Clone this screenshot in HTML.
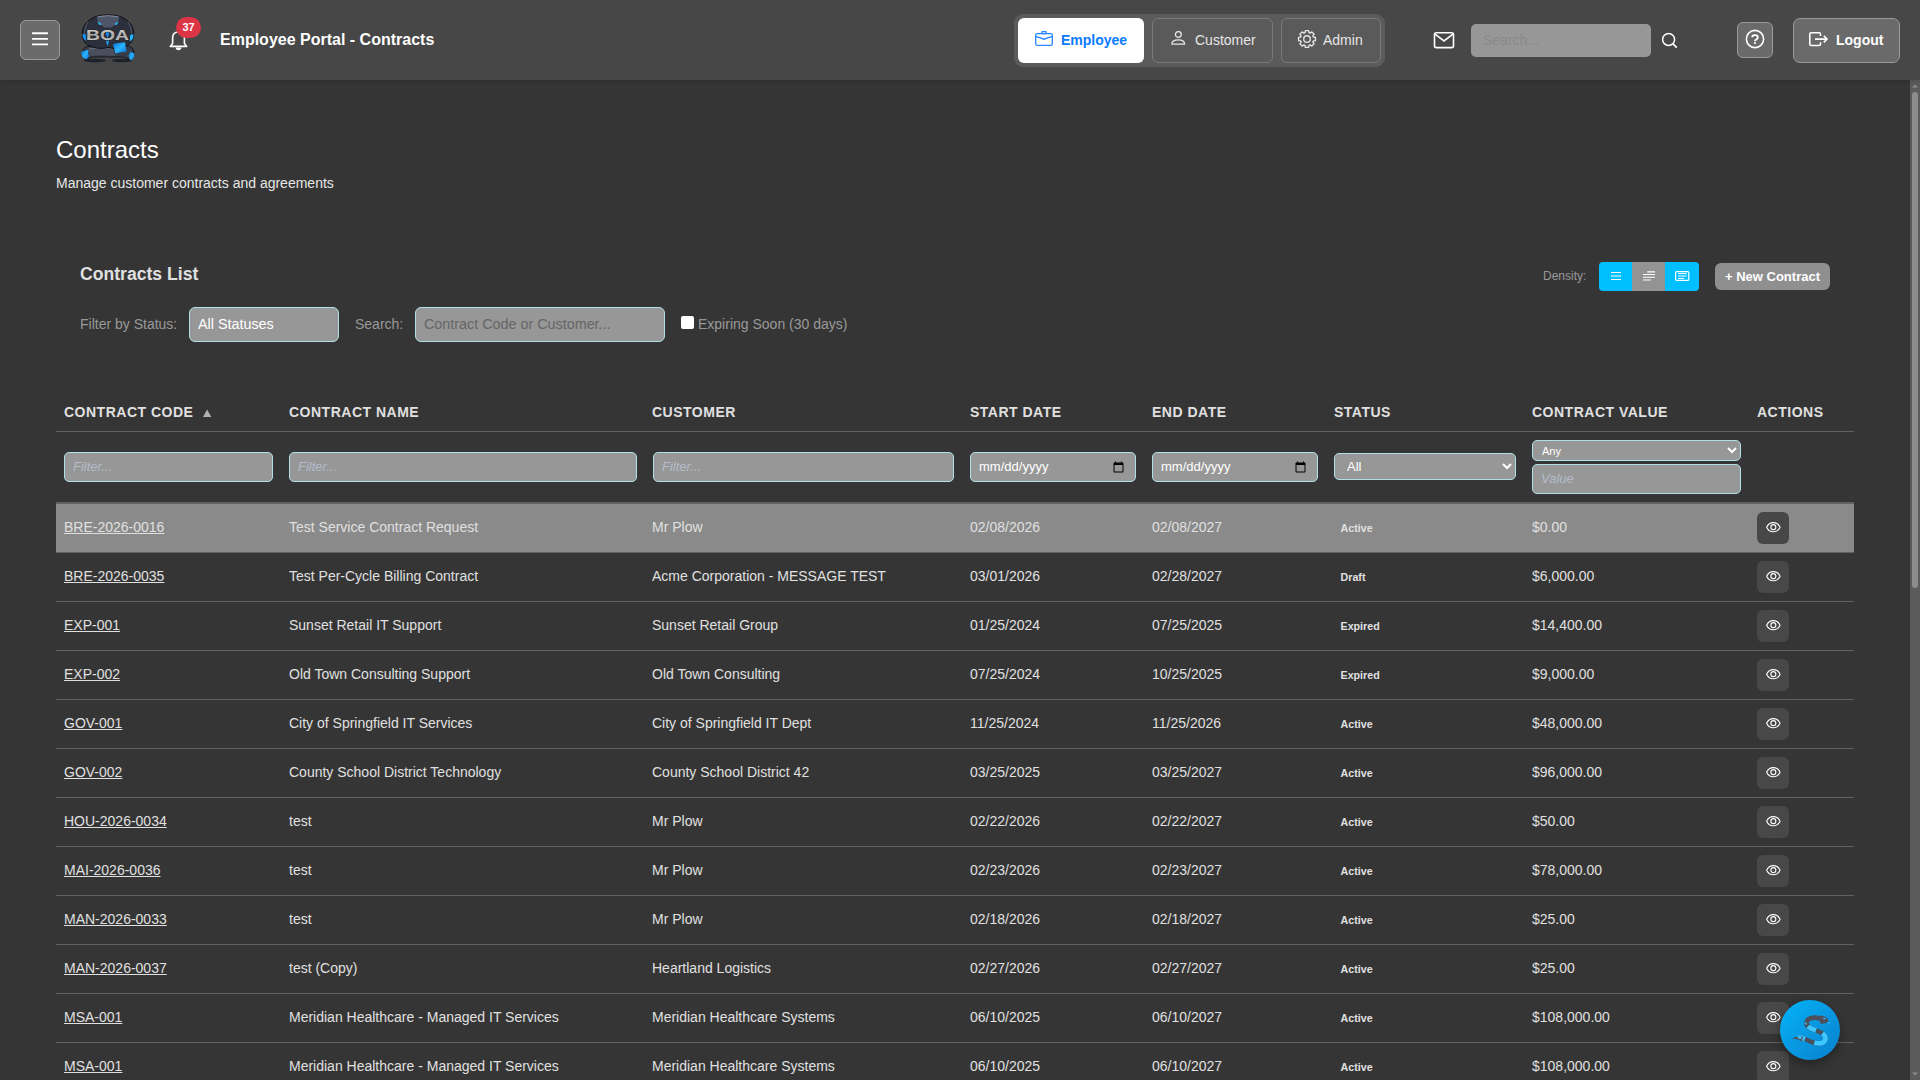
<!DOCTYPE html>
<html><head><meta charset="utf-8">
<style>
*{box-sizing:border-box;}
html,body{margin:0;padding:0;width:1920px;height:1080px;overflow:hidden;background:#353535;font-family:"Liberation Sans",sans-serif;}
.abs{position:absolute;}
#hdr{position:absolute;left:0;top:0;width:1920px;height:80px;background:#474747;box-shadow:0 2px 4px rgba(0,0,0,0.12);z-index:2;}
.hbtn{position:absolute;background:#6a6a6a;border:1px solid #9a9a9a;border-radius:6px;}
.navwrap{position:absolute;left:1014px;top:14px;width:371px;height:53px;background:#5b5b5b;border-radius:9px;}
.nbtn{position:absolute;top:4px;height:45px;border-radius:6px;font-size:14px;color:#e6e6e6;}
.nbtn svg{position:absolute;}
.nbtn span{position:absolute;top:14px;line-height:16px;}
#scroll{position:absolute;left:1910px;top:80px;width:10px;height:1000px;background:#5b5b5b;}
.txt{position:absolute;white-space:nowrap;}
.inp{position:absolute;background:#979797;border:1px solid #b0e0e6;border-radius:5px;}
.th{position:absolute;top:404px;font-size:14px;font-weight:bold;letter-spacing:0.5px;color:#e0e0e0;line-height:16px;white-space:nowrap;}
.row{position:absolute;left:56px;width:1798px;height:49px;border-bottom:1px solid #616161;}
.row .c{position:absolute;top:15px;font-size:14px;line-height:16px;color:#e0e0e0;white-space:nowrap;}
.row .code{text-decoration:underline;}
.row .st{font-size:10.7px;font-weight:bold;top:18px;line-height:13px;margin-left:-0.5px;}
.eye{position:absolute;left:1701px;top:8px;width:32px;height:32px;background:#484848;border-radius:6px;}
.eye svg{position:absolute;left:8.7px;top:9.8px;}
.row.hov{background:#8a8a8a;height:49px;}
.row.hov .eye{background:#474747;}
input.date,select.sel{position:absolute;margin:0;background:#979797;border:1px solid #b0e0e6;border-radius:5px;color:#fff;font-family:"Liberation Sans",sans-serif;}
input.date{font-size:13px;padding:0 8px;}
input.date::-webkit-datetime-edit{position:relative;top:-1px;}
input.date::-webkit-datetime-edit-text,input.date::-webkit-datetime-edit-month-field,input.date::-webkit-datetime-edit-day-field,input.date::-webkit-datetime-edit-year-field{padding:0;}
select.sel{font-size:13px;padding:0 8px;}
</style></head><body>

<div id="hdr">
  <div class="hbtn" style="left:20px;top:20px;width:40px;height:40px;">
    <svg class="abs" style="left:0;top:0;" width="38" height="38"><path d="M11.8 12.3H26.2M11.8 17.9H26.2M11.8 23.4H26.2" stroke="#fff" stroke-width="1.9" stroke-linecap="round"/></svg>
  </div>
  <!-- logo -->
  <svg class="abs" style="left:76px;top:12px;" width="64" height="56" viewBox="76 12 64 56">
    <defs>
      <linearGradient id="lg1" x1="0" y1="0" x2="0" y2="1"><stop offset="0" stop-color="#e6e6e6"/><stop offset="0.55" stop-color="#a9a9a9"/><stop offset="1" stop-color="#d0d0d0"/></linearGradient>
      <linearGradient id="lg2" x1="0" y1="0" x2="1" y2="1"><stop offset="0" stop-color="#0a6fd8"/><stop offset="0.5" stop-color="#2ab4ff"/><stop offset="1" stop-color="#0a6fd8"/></linearGradient>
    </defs>
    <ellipse cx="95" cy="60.5" rx="11" ry="1.8" fill="#1d212b"/>
    <ellipse cx="122" cy="60.5" rx="10" ry="1.8" fill="#1d212b"/>
    <path d="M83 53 Q82 47 88 46.5 L128 46 Q134.5 47.5 134 54 Q133.5 59.5 128.5 59 L123 57 L92 57 L86 59.5 Q82.5 58.5 83 53Z" fill="#383d4b" stroke="#0f121a" stroke-width="0.9"/>
    <path d="M81.4 51.5 Q80.8 57.5 86.5 59.5 L89 56.5 Q87.2 53 88.8 49.8Z" fill="url(#lg2)"/>
    <path d="M134.3 53.5 Q134.8 59.2 130.2 60.2 L128.6 55.5 Q129.8 53.5 130 51.8Z" fill="url(#lg2)"/>
    <path d="M88.5 48 Q101 45.5 113 47.5 L115 56 Q101 54.5 89.5 56Z" fill="#4a4f5e"/>
    <path d="M89 49 Q101 47 113 48.5" stroke="#7a7f8e" stroke-width="0.7" fill="none"/>
    <path d="M95.5 16.5 Q108 13.2 120.5 16.5 Q133.5 22 133.8 33 Q134 41.5 127.5 45.5 Q118 50 108 47.5 Q98 50 88.5 45.5 Q82 41.5 82.2 33 Q82.5 22 95.5 16.5Z" fill="#2b303c" stroke="#0d1017" stroke-width="1"/>
    <path d="M88 22 Q84 28 84.5 35 M128 22 Q132 28 131.5 35" stroke="#4a5063" stroke-width="1.2" fill="none"/>
    <path d="M113 44 Q120 42 125 42.5 L126.5 51.5 Q120 52 115.5 53.5Z" fill="url(#lg2)"/>
    <path d="M96.5 16.5 Q108 13.8 119.5 16.5 L117.5 23 L111.5 27.5 L104.5 27.5 L98.5 23Z" fill="#4e5568"/>
    <path d="M98 16.8 Q108 14.6 118 16.8" stroke="#8a90a0" stroke-width="0.8" fill="none"/>
    <path d="M97.5 21.3 L102 24.2 L99.2 25Z" fill="#2cc0ff"/>
    <path d="M118.5 21.3 L114 24.2 L116.8 25Z" fill="#2cc0ff"/>
    <path d="M82.4 34 Q82.5 39.5 86.5 41 L86.5 34.5Z" fill="#1b8ef2"/>
    <path d="M133.6 34.5 Q133.4 40 129.8 41.5 L130.2 35Z" fill="#22b6ff"/>
    <path d="M105.5 39 L107.5 46.5 L109.5 39Z" fill="#1fa3f7"/>
    <text x="107.6" y="39.8" text-anchor="middle" font-family="Liberation Sans" font-weight="bold" font-size="15.5" fill="url(#lg1)" stroke="#2a2a2a" stroke-width="1.6" paint-order="stroke" textLength="43" lengthAdjust="spacingAndGlyphs">BOA</text>
    <path d="M105.5 32.5 L107.5 38.5 L109.5 32.5Z" fill="#1b8ef2"/>
  </svg>
  <!-- bell -->
  <svg class="abs" style="left:168px;top:29px;" width="21" height="22" viewBox="0 0 21 22"><path d="M2.3 17.4 L4.6 14.6 L4.6 9 Q4.6 3 10.5 3 Q16.4 3 16.4 9 L16.4 14.6 L18.7 17.4Z" fill="none" stroke="#fff" stroke-width="1.6" stroke-linejoin="round"/><path d="M7.6 18.6 H13.4 Q13.2 21.2 10.5 21.2 Q7.8 21.2 7.6 18.6Z" fill="#fff"/></svg>
  <div class="abs" style="left:176px;top:17px;width:25px;height:21px;border-radius:11px;background:#dc3545;color:#fff;font-size:11px;font-weight:bold;text-align:center;line-height:21px;">37</div>
  <div class="txt" style="left:220px;top:31px;font-size:16px;font-weight:bold;color:#fff;line-height:18px;">Employee Portal - Contracts</div>

  <div class="navwrap">
    <div class="nbtn" style="left:4px;width:126px;background:#fff;color:#0d7bff;font-weight:bold;">
      <svg style="left:17px;top:13px;" width="18" height="16" viewBox="0 0 18 16"><rect x="0.65" y="2.65" width="16.7" height="11.7" rx="1.6" fill="none" stroke="#2a86ff" stroke-width="1.3"/><rect x="6.9" y="0.65" width="4.4" height="2" rx="0.6" fill="none" stroke="#2a86ff" stroke-width="1.3"/><path d="M0.8 5.4 L9 8.2 L17.2 5.4" fill="none" stroke="#2a86ff" stroke-width="1.3"/></svg>
      <span style="left:43px;">Employee</span>
    </div>
    <div class="nbtn" style="left:138px;width:121px;background:#5a5a5a;border:1px solid #7a7a7a;">
      <svg style="left:18px;top:12px;" width="16" height="16" viewBox="0 0 16 16"><circle cx="7.3" cy="3.5" r="2.9" fill="none" stroke="#e6e6e6" stroke-width="1.3"/><path d="M0.9 13.2 Q0.9 8.9 7.25 8.9 Q13.6 8.9 13.6 13.2 Z" fill="none" stroke="#e6e6e6" stroke-width="1.3" stroke-linejoin="round"/></svg>
      <span style="left:42px;top:13px;">Customer</span>
    </div>
    <div class="nbtn" style="left:267px;width:100px;background:#5a5a5a;border:1px solid #7a7a7a;">
      <svg style="left:15px;top:10px;" width="20" height="20" viewBox="0 0 20 20"><path d="M16.29 8.02 L18.44 8.36 L18.44 11.64 L16.29 11.98 L15.85 13.05 L17.13 14.81 L14.81 17.13 L13.05 15.85 L11.98 16.29 L11.64 18.44 L8.36 18.44 L8.02 16.29 L6.95 15.85 L5.19 17.13 L2.87 14.81 L4.15 13.05 L3.71 11.98 L1.56 11.64 L1.56 8.36 L3.71 8.02 L4.15 6.95 L2.87 5.19 L5.19 2.87 L6.95 4.15 L8.02 3.71 L8.36 1.56 L11.64 1.56 L11.98 3.71 L13.05 4.15 L14.81 2.87 L17.13 5.19 L15.85 6.95Z" fill="none" stroke="#e6e6e6" stroke-width="1.35" stroke-linejoin="round"/><circle cx="10" cy="10" r="3.3" fill="none" stroke="#e6e6e6" stroke-width="1.35"/></svg>
      <span style="left:41px;top:13px;">Admin</span>
    </div>
  </div>

  <!-- mail -->
  <svg class="abs" style="left:1433px;top:31px;" width="22" height="18" viewBox="0 0 22 18"><rect x="1.5" y="1.7" width="19" height="14.9" rx="1.8" fill="none" stroke="#fff" stroke-width="1.6"/><path d="M2 3.2 L11 10 L20 3.2" fill="none" stroke="#fff" stroke-width="1.6"/></svg>
  <div class="abs" style="left:1471px;top:24px;width:180px;height:33px;background:#979797;border-radius:5px;"></div>
  <div class="txt" style="left:1483px;top:32px;font-size:14px;color:#8a8a8a;line-height:16px;">Search...</div>
  <svg class="abs" style="left:1661px;top:32px;" width="18" height="17" viewBox="0 0 18 17"><circle cx="7.6" cy="7.4" r="6" fill="none" stroke="#fff" stroke-width="1.5"/><path d="M12 11.8 L15.8 15.6" stroke="#fff" stroke-width="1.7"/></svg>

  <div class="hbtn" style="left:1737px;top:22px;width:36px;height:36px;">
    <svg class="abs" style="left:6.9px;top:6px;" width="20" height="20" viewBox="0 0 20 20"><circle cx="10" cy="10" r="8.6" fill="none" stroke="#fff" stroke-width="1.6"/><path d="M7.2 8.2 Q7.2 6.1 10 6.1 Q12.8 6.1 12.8 8.3 Q12.8 9.7 11.3 10.5 Q10 11.1 10 12.2" fill="none" stroke="#fff" stroke-width="1.9"/><circle cx="10" cy="14" r="1.1" fill="#fff"/></svg>
  </div>
  <div class="hbtn" style="left:1793px;top:18px;width:107px;height:45px;border-radius:7px;">
    <svg class="abs" style="left:15px;top:13px;" width="20" height="15" viewBox="0 0 20 15"><path d="M11.5 4 V2.3 Q11.5 0.8 10 0.8 H2.3 Q0.8 0.8 0.8 2.3 V12 Q0.8 13.5 2.3 13.5 H10 Q11.5 13.5 11.5 12 V10.3" fill="none" stroke="#fff" stroke-width="1.6"/><path d="M6 7.1 H18 M14.8 3.8 L18 7.1 L14.8 10.4" fill="none" stroke="#fff" stroke-width="1.6"/></svg>
    <div class="txt" style="left:42px;top:13px;font-size:14px;font-weight:bold;color:#fff;line-height:16px;">Logout</div>
  </div>
</div>

<div id="scroll">
  <div class="abs" style="left:2px;top:12px;width:6px;height:496px;background:#8c8c8c;border-radius:3px;"></div>
  <svg class="abs" style="left:2px;top:4px;" width="6" height="4"><path d="M0 3.5 L3 0.5 L6 3.5Z" fill="#8c8c8c"/></svg>
  <svg class="abs" style="left:2px;top:992px;" width="6" height="4"><path d="M0 0.5 L3 3.5 L6 0.5Z" fill="#8c8c8c"/></svg>
</div>

<!-- page heading -->
<div class="txt" style="left:56px;top:136px;font-size:24px;color:#fff;line-height:27px;">Contracts</div>
<div class="txt" style="left:56px;top:175px;font-size:14px;color:#e6e6e6;line-height:16px;">Manage customer contracts and agreements</div>

<div class="txt" style="left:80px;top:264px;font-size:17.6px;font-weight:bold;color:#e0e0e0;line-height:20px;">Contracts List</div>
<div class="txt" style="left:80px;top:316px;font-size:14px;color:#999;line-height:16px;">Filter by Status:</div>
<div class="inp" style="left:189px;top:307px;width:150px;height:35px;border-radius:6px;"></div>
<div class="txt" style="left:198px;top:316px;font-size:14.35px;color:#fff;line-height:16px;">All Statuses</div>
<div class="txt" style="left:355px;top:316px;font-size:14px;color:#999;line-height:16px;">Search:</div>
<div class="inp" style="left:415px;top:307px;width:250px;height:35px;border-radius:6px;"></div>
<div class="txt" style="left:424px;top:316px;font-size:14.35px;color:#666;line-height:16px;">Contract Code or Customer...</div>
<div class="abs" style="left:681px;top:316px;width:13px;height:13px;background:#fff;border-radius:2px;"></div>
<div class="txt" style="left:698px;top:316px;font-size:14px;color:#999;line-height:16px;">Expiring Soon (30 days)</div>

<div class="txt" style="left:1543px;top:269px;font-size:12px;color:#999;line-height:14px;">Density:</div>
<div class="abs" style="left:1599px;top:262px;width:100px;height:29px;border-radius:4px;overflow:hidden;">
  <div class="abs" style="left:0;top:0;width:33px;height:29px;background:#00bfff;"></div>
  <div class="abs" style="left:33px;top:0;width:33px;height:29px;background:#939393;"></div>
  <div class="abs" style="left:66px;top:0;width:34px;height:29px;background:#00bfff;"></div>
  <svg class="abs" style="left:12px;top:10px;" width="11" height="9"><path d="M0 0.5H10M0 4H10M0 7.5H10" stroke="#fff" stroke-width="1"/></svg>
  <svg class="abs" style="left:44px;top:9px;" width="13" height="11"><path d="M4.2 0.9H12M0 3.5H12M0 6.2H12M0 9H8" stroke="#fff" stroke-width="1.1"/></svg>
  <svg class="abs" style="left:76px;top:9px;" width="15" height="11"><rect x="0.6" y="0.6" width="13.2" height="8.8" rx="1" fill="none" stroke="#fff" stroke-width="1.2"/><path d="M3.1 2.6H11.6M3.1 5H11.6M3.1 7.4H9.1" stroke="#fff" stroke-width="1"/></svg>
</div>
<div class="abs" style="left:1715px;top:263px;width:115px;height:27px;border-radius:6px;background:#8f8f8f;"></div>
<div class="txt" style="left:1725px;top:269px;font-size:13px;font-weight:bold;color:#fff;line-height:15px;">+ New Contract</div>

<!-- table header -->
<div class="th" style="left:64px;">CONTRACT CODE</div>
<svg class="abs" style="left:203px;top:409px;" width="9" height="8" viewBox="0 0 9 8"><path d="M4.15 0.4 L8.3 8 L0 8Z" fill="#b0b0b0"/></svg>
<div class="th" style="left:289px;">CONTRACT NAME</div>
<div class="th" style="left:652px;">CUSTOMER</div>
<div class="th" style="left:970px;">START DATE</div>
<div class="th" style="left:1152px;">END DATE</div>
<div class="th" style="left:1334px;">STATUS</div>
<div class="th" style="left:1532px;">CONTRACT VALUE</div>
<div class="th" style="left:1757px;">ACTIONS</div>
<div class="abs" style="left:56px;top:431px;width:1798px;height:1px;background:#616161;"></div>

<!-- filter row -->
<div class="inp" style="left:64px;top:452px;width:209px;height:30px;"></div>
<div class="txt" style="left:73px;top:459px;font-size:13px;font-style:italic;color:#b4bccc;line-height:15px;">Filter...</div>
<div class="inp" style="left:289px;top:452px;width:348px;height:30px;"></div>
<div class="txt" style="left:298px;top:459px;font-size:13px;font-style:italic;color:#b4bccc;line-height:15px;">Filter...</div>
<div class="inp" style="left:653px;top:452px;width:301px;height:30px;"></div>
<div class="txt" style="left:662px;top:459px;font-size:13px;font-style:italic;color:#b4bccc;line-height:15px;">Filter...</div>


<input class="date" type="date" style="left:970px;top:452px;width:166px;height:30px;">
<input class="date" type="date" style="left:1152px;top:452px;width:166px;height:30px;">
<select class="sel" style="left:1334px;top:453px;width:182px;height:27px;"><option>All</option></select>
<select class="sel" style="left:1532px;top:440px;width:209px;height:21px;font-size:11px;padding:0 5px;"><option>Any</option></select>
<div class="inp" style="left:1532px;top:464px;width:209px;height:30px;"></div>
<div class="txt" style="left:1541px;top:471px;font-size:13px;font-style:italic;color:#b4bccc;line-height:15px;">Value</div>
<div class="abs" style="left:56px;top:502px;width:1798px;height:2px;background:#616161;"></div>

<div id="rows">
<div class="row hov" style="top:504px"><div class="c code" style="left:8px">BRE-2026-0016</div><div class="c" style="left:233px">Test Service Contract Request</div><div class="c" style="left:596px">Mr Plow</div><div class="c" style="left:914px">02/08/2026</div><div class="c" style="left:1096px">02/08/2027</div><div class="c st" style="left:1285px">Active</div><div class="c" style="left:1476px">$0.00</div><div class="eye"><svg width="15" height="11" viewBox="0 0 15 11"><path d="M0.6 5.15 C3.5 -0.9, 11.2 -0.9, 14.1 5.15 C11.2 11.2, 3.5 11.2, 0.6 5.15Z" fill="none" stroke="#fff" stroke-width="1.05"/><circle cx="7.35" cy="5.15" r="2.5" fill="none" stroke="#fff" stroke-width="1.1"/></svg></div></div>
<div class="row" style="top:553px"><div class="c code" style="left:8px">BRE-2026-0035</div><div class="c" style="left:233px">Test Per-Cycle Billing Contract</div><div class="c" style="left:596px">Acme Corporation - MESSAGE TEST</div><div class="c" style="left:914px">03/01/2026</div><div class="c" style="left:1096px">02/28/2027</div><div class="c st" style="left:1285px">Draft</div><div class="c" style="left:1476px">$6,000.00</div><div class="eye"><svg width="15" height="11" viewBox="0 0 15 11"><path d="M0.6 5.15 C3.5 -0.9, 11.2 -0.9, 14.1 5.15 C11.2 11.2, 3.5 11.2, 0.6 5.15Z" fill="none" stroke="#fff" stroke-width="1.05"/><circle cx="7.35" cy="5.15" r="2.5" fill="none" stroke="#fff" stroke-width="1.1"/></svg></div></div>
<div class="row" style="top:602px"><div class="c code" style="left:8px">EXP-001</div><div class="c" style="left:233px">Sunset Retail IT Support</div><div class="c" style="left:596px">Sunset Retail Group</div><div class="c" style="left:914px">01/25/2024</div><div class="c" style="left:1096px">07/25/2025</div><div class="c st" style="left:1285px">Expired</div><div class="c" style="left:1476px">$14,400.00</div><div class="eye"><svg width="15" height="11" viewBox="0 0 15 11"><path d="M0.6 5.15 C3.5 -0.9, 11.2 -0.9, 14.1 5.15 C11.2 11.2, 3.5 11.2, 0.6 5.15Z" fill="none" stroke="#fff" stroke-width="1.05"/><circle cx="7.35" cy="5.15" r="2.5" fill="none" stroke="#fff" stroke-width="1.1"/></svg></div></div>
<div class="row" style="top:651px"><div class="c code" style="left:8px">EXP-002</div><div class="c" style="left:233px">Old Town Consulting Support</div><div class="c" style="left:596px">Old Town Consulting</div><div class="c" style="left:914px">07/25/2024</div><div class="c" style="left:1096px">10/25/2025</div><div class="c st" style="left:1285px">Expired</div><div class="c" style="left:1476px">$9,000.00</div><div class="eye"><svg width="15" height="11" viewBox="0 0 15 11"><path d="M0.6 5.15 C3.5 -0.9, 11.2 -0.9, 14.1 5.15 C11.2 11.2, 3.5 11.2, 0.6 5.15Z" fill="none" stroke="#fff" stroke-width="1.05"/><circle cx="7.35" cy="5.15" r="2.5" fill="none" stroke="#fff" stroke-width="1.1"/></svg></div></div>
<div class="row" style="top:700px"><div class="c code" style="left:8px">GOV-001</div><div class="c" style="left:233px">City of Springfield IT Services</div><div class="c" style="left:596px">City of Springfield IT Dept</div><div class="c" style="left:914px">11/25/2024</div><div class="c" style="left:1096px">11/25/2026</div><div class="c st" style="left:1285px">Active</div><div class="c" style="left:1476px">$48,000.00</div><div class="eye"><svg width="15" height="11" viewBox="0 0 15 11"><path d="M0.6 5.15 C3.5 -0.9, 11.2 -0.9, 14.1 5.15 C11.2 11.2, 3.5 11.2, 0.6 5.15Z" fill="none" stroke="#fff" stroke-width="1.05"/><circle cx="7.35" cy="5.15" r="2.5" fill="none" stroke="#fff" stroke-width="1.1"/></svg></div></div>
<div class="row" style="top:749px"><div class="c code" style="left:8px">GOV-002</div><div class="c" style="left:233px">County School District Technology</div><div class="c" style="left:596px">County School District 42</div><div class="c" style="left:914px">03/25/2025</div><div class="c" style="left:1096px">03/25/2027</div><div class="c st" style="left:1285px">Active</div><div class="c" style="left:1476px">$96,000.00</div><div class="eye"><svg width="15" height="11" viewBox="0 0 15 11"><path d="M0.6 5.15 C3.5 -0.9, 11.2 -0.9, 14.1 5.15 C11.2 11.2, 3.5 11.2, 0.6 5.15Z" fill="none" stroke="#fff" stroke-width="1.05"/><circle cx="7.35" cy="5.15" r="2.5" fill="none" stroke="#fff" stroke-width="1.1"/></svg></div></div>
<div class="row" style="top:798px"><div class="c code" style="left:8px">HOU-2026-0034</div><div class="c" style="left:233px">test</div><div class="c" style="left:596px">Mr Plow</div><div class="c" style="left:914px">02/22/2026</div><div class="c" style="left:1096px">02/22/2027</div><div class="c st" style="left:1285px">Active</div><div class="c" style="left:1476px">$50.00</div><div class="eye"><svg width="15" height="11" viewBox="0 0 15 11"><path d="M0.6 5.15 C3.5 -0.9, 11.2 -0.9, 14.1 5.15 C11.2 11.2, 3.5 11.2, 0.6 5.15Z" fill="none" stroke="#fff" stroke-width="1.05"/><circle cx="7.35" cy="5.15" r="2.5" fill="none" stroke="#fff" stroke-width="1.1"/></svg></div></div>
<div class="row" style="top:847px"><div class="c code" style="left:8px">MAI-2026-0036</div><div class="c" style="left:233px">test</div><div class="c" style="left:596px">Mr Plow</div><div class="c" style="left:914px">02/23/2026</div><div class="c" style="left:1096px">02/23/2027</div><div class="c st" style="left:1285px">Active</div><div class="c" style="left:1476px">$78,000.00</div><div class="eye"><svg width="15" height="11" viewBox="0 0 15 11"><path d="M0.6 5.15 C3.5 -0.9, 11.2 -0.9, 14.1 5.15 C11.2 11.2, 3.5 11.2, 0.6 5.15Z" fill="none" stroke="#fff" stroke-width="1.05"/><circle cx="7.35" cy="5.15" r="2.5" fill="none" stroke="#fff" stroke-width="1.1"/></svg></div></div>
<div class="row" style="top:896px"><div class="c code" style="left:8px">MAN-2026-0033</div><div class="c" style="left:233px">test</div><div class="c" style="left:596px">Mr Plow</div><div class="c" style="left:914px">02/18/2026</div><div class="c" style="left:1096px">02/18/2027</div><div class="c st" style="left:1285px">Active</div><div class="c" style="left:1476px">$25.00</div><div class="eye"><svg width="15" height="11" viewBox="0 0 15 11"><path d="M0.6 5.15 C3.5 -0.9, 11.2 -0.9, 14.1 5.15 C11.2 11.2, 3.5 11.2, 0.6 5.15Z" fill="none" stroke="#fff" stroke-width="1.05"/><circle cx="7.35" cy="5.15" r="2.5" fill="none" stroke="#fff" stroke-width="1.1"/></svg></div></div>
<div class="row" style="top:945px"><div class="c code" style="left:8px">MAN-2026-0037</div><div class="c" style="left:233px">test (Copy)</div><div class="c" style="left:596px">Heartland Logistics</div><div class="c" style="left:914px">02/27/2026</div><div class="c" style="left:1096px">02/27/2027</div><div class="c st" style="left:1285px">Active</div><div class="c" style="left:1476px">$25.00</div><div class="eye"><svg width="15" height="11" viewBox="0 0 15 11"><path d="M0.6 5.15 C3.5 -0.9, 11.2 -0.9, 14.1 5.15 C11.2 11.2, 3.5 11.2, 0.6 5.15Z" fill="none" stroke="#fff" stroke-width="1.05"/><circle cx="7.35" cy="5.15" r="2.5" fill="none" stroke="#fff" stroke-width="1.1"/></svg></div></div>
<div class="row" style="top:994px"><div class="c code" style="left:8px">MSA-001</div><div class="c" style="left:233px">Meridian Healthcare - Managed IT Services</div><div class="c" style="left:596px">Meridian Healthcare Systems</div><div class="c" style="left:914px">06/10/2025</div><div class="c" style="left:1096px">06/10/2027</div><div class="c st" style="left:1285px">Active</div><div class="c" style="left:1476px">$108,000.00</div><div class="eye"><svg width="15" height="11" viewBox="0 0 15 11"><path d="M0.6 5.15 C3.5 -0.9, 11.2 -0.9, 14.1 5.15 C11.2 11.2, 3.5 11.2, 0.6 5.15Z" fill="none" stroke="#fff" stroke-width="1.05"/><circle cx="7.35" cy="5.15" r="2.5" fill="none" stroke="#fff" stroke-width="1.1"/></svg></div></div>
<div class="row" style="top:1043px"><div class="c code" style="left:8px">MSA-001</div><div class="c" style="left:233px">Meridian Healthcare - Managed IT Services</div><div class="c" style="left:596px">Meridian Healthcare Systems</div><div class="c" style="left:914px">06/10/2025</div><div class="c" style="left:1096px">06/10/2027</div><div class="c st" style="left:1285px">Active</div><div class="c" style="left:1476px">$108,000.00</div><div class="eye"><svg width="15" height="11" viewBox="0 0 15 11"><path d="M0.6 5.15 C3.5 -0.9, 11.2 -0.9, 14.1 5.15 C11.2 11.2, 3.5 11.2, 0.6 5.15Z" fill="none" stroke="#fff" stroke-width="1.05"/><circle cx="7.35" cy="5.15" r="2.5" fill="none" stroke="#fff" stroke-width="1.1"/></svg></div></div>
</div><!--/rows-->


<div class="abs" style="left:1780px;top:1000px;width:60px;height:60px;border-radius:50%;background:linear-gradient(135deg,#00b4f8 0%,#0a96e0 55%,#0580cc 100%);box-shadow:0 4px 10px rgba(0,0,0,0.35);">
  <svg class="abs" style="left:0;top:0;" width="60" height="60" viewBox="0 0 60 60">
    <path d="M42 19.5 C36 16.5, 27 17, 26.5 23 C26 28, 36 30, 41 32.5 C46 35, 47 40, 43 42.5 C39 45, 31 42, 26 39.5 C22 37.5, 17 37, 12.5 38.5" fill="none" stroke="#4b505c" stroke-width="4.7" stroke-dasharray="71 100"/>
    <path d="M42 19.5 C36 16.5, 27 17, 26.5 23 C26 28, 36 30, 41 32.5 C46 35, 47 40, 43 42.5 C39 45, 31 42, 26 39.5 C22 37.5, 17 37, 12.5 38.5" fill="none" stroke="#3ec6ff" stroke-width="4.7" stroke-dasharray="0 22 9 7 20 10 7 100"/>
    <path d="M23.2 36.9 Q17 35.2 11.5 38.9 Q17 37.8 21.8 41.6Z" fill="#4b505c"/><path d="M21.5 36.5 Q19 36 17 36.4 L18.5 38.5 Q20 38.6 21.5 39.5Z" fill="#3ec6ff"/>
    <path d="M40 15.2 Q47 16 49 21 L46 23 Q42 24 40 23.5Z" fill="#4b505c"/>
    <path d="M43 17.6 L46 18.6 L44 19.6Z" fill="#3ec6ff"/>
    <path d="M48.5 21.5 L50.5 23.5 L48 23Z" fill="#3ec6ff"/>
    <path d="M24.5 23 L26.5 22 L26.5 25.5Z" fill="#3ec6ff"/>
  </svg>
</div>
</body></html>
